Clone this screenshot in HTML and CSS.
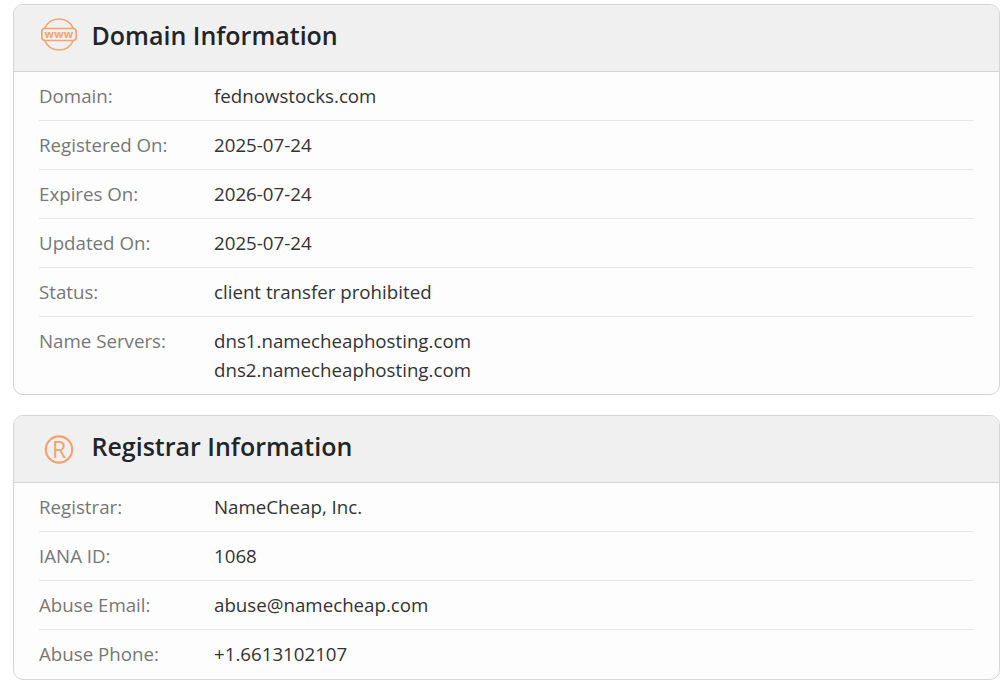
FILE: index.html
```html
<!DOCTYPE html>
<html lang="en">
<head>
<meta charset="utf-8">
<title>Domain Information</title>
<link rel="stylesheet" href="styles.css">
</head>
<body>
<section class="card">
  <header class="card-head">
    <span class="icon">
      <svg width="36" height="36" viewBox="0 0 36 36" fill="none" stroke="#f5a36c" stroke-width="1.7">
        <path d="M3.7 11.5A15.5 15.5 0 0 1 32.3 11.5"/>
        <path d="M3.7 23.5A15.5 15.5 0 0 0 32.3 23.5"/>
        <rect x="0.8" y="11.5" width="34.4" height="12" rx="3"/>
        <text x="18" y="21.4" text-anchor="middle" class="www">www</text>
      </svg>
    </span>
    <h2>Domain Information</h2>
  </header>
  <dl class="rows">
    <div class="row"><dt>Domain:</dt><dd>fednowstocks.com</dd></div>
    <div class="row"><dt>Registered On:</dt><dd>2025-07-24</dd></div>
    <div class="row"><dt>Expires On:</dt><dd>2026-07-24</dd></div>
    <div class="row"><dt>Updated On:</dt><dd>2025-07-24</dd></div>
    <div class="row"><dt>Status:</dt><dd>client transfer prohibited</dd></div>
    <div class="row"><dt>Name Servers:</dt><dd>dns1.namecheaphosting.com<br>dns2.namecheaphosting.com</dd></div>
  </dl>
</section>
<section class="card">
  <header class="card-head">
    <span class="icon">
      <svg width="36" height="36" viewBox="0 0 36 36" fill="none" stroke="#f5a36c" stroke-width="2.2">
        <circle cx="18" cy="21.5" r="13.2"/>
        <text x="18" y="29.7" text-anchor="middle" class="reg">R</text>
      </svg>
    </span>
    <h2>Registrar Information</h2>
  </header>
  <dl class="rows">
    <div class="row"><dt>Registrar:</dt><dd>NameCheap, Inc.</dd></div>
    <div class="row"><dt>IANA ID:</dt><dd>1068</dd></div>
    <div class="row"><dt>Abuse Email:</dt><dd>abuse@namecheap.com</dd></div>
    <div class="row"><dt>Abuse Phone:</dt><dd>+1.6613102107</dd></div>
  </dl>
</section>
</body>
</html>
```
FILE: styles.css
```css
* { box-sizing: border-box; }
html, body { margin: 0; height: 100%; overflow: hidden; }
body {
  padding: 4px 6px 0 13px;
  background: #fff;
  font-family: "Open Sans", "Noto Sans", sans-serif;
  color: #333;
}
.card {
  border: 1px solid #d5d5d5;
  border-radius: 10px;
  background: #fdfdfd;
  margin-bottom: 20px;
  overflow: hidden;
}
.card:last-child .rows { padding-bottom: 1px; }
.card-head {
  display: flex;
  align-items: center;
  height: 67px;
  padding: 0 0 6px 27px;
  background: #f0f0f0;
  border-bottom: 1px solid #d5d5d5;
}
.icon {
  width: 36px;
  margin-right: 14.5px;
  display: flex;
  justify-content: center;
}
.card-head h2 {
  margin: 0;
  font-size: 25px;
  font-weight: 600;
  color: #212529;
  line-height: 1;
}
.www {
  font-family: "Open Sans", sans-serif;
  font-size: 11px;
  font-weight: 700;
  letter-spacing: 0.2px;
  fill: #f5a36c;
  stroke: none;
}
.reg {
  font-family: "Open Sans", sans-serif;
  font-size: 23px;
  font-weight: 500;
  fill: #f5a36c;
  stroke: none;
}
.rows { margin: 0; padding: 0 25px; }
.row {
  display: flex;
  padding: 9px 0 10px;
  border-bottom: 1px solid #e8e8e8;
  font-size: 18.72px;
  line-height: 29px;
}
.row:last-child { border-bottom: 0; }
.row dt { width: 175px; flex: none; color: #777; }
.row dd { margin: 0; color: #333; }
```
